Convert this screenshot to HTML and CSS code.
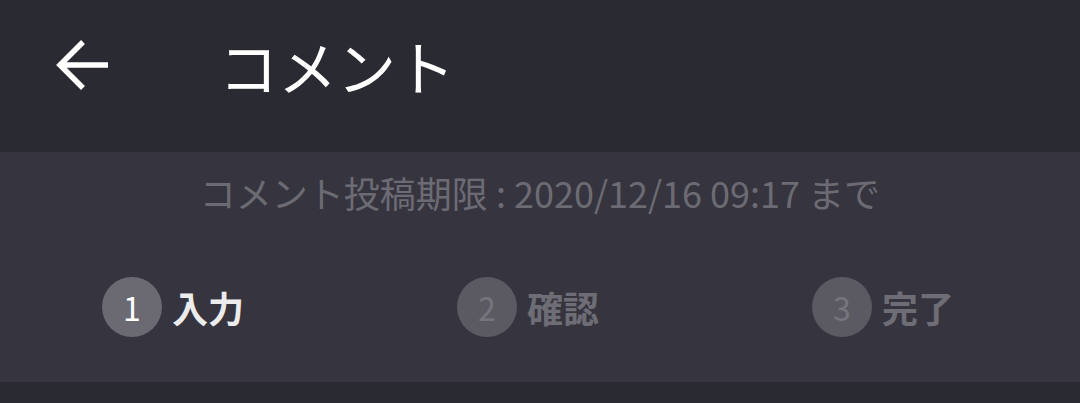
FILE: index.html
```html
<!DOCTYPE html>
<html lang="ja">
<head>
    <meta charset="UTF-8">
    <meta name="viewport" content="width=device-width, initial-scale=1.0">
    <title>コメント</title>
    <link rel="stylesheet" href="styles.css">
</head>
<body>
    <header class="app-bar">
        <button class="back-btn" aria-label="戻る">
            <svg width="60" height="60" viewBox="0 0 60 60">
                <path d="M57 30H9 M32 7 L9 30 L32 53" fill="none" stroke="#fff" stroke-width="5.5"/>
            </svg>
        </button>
        <h1 class="title">コメント</h1>
    </header>

    <section class="comment-info">
        <p class="deadline">コメント投稿期限 : 2020/12/16 09:17 まで</p>

        <!-- ステップ表示 -->
        <ol class="steps">
            <li class="step active"><span class="num">1</span><span class="label">入力</span></li>
            <li class="step"><span class="num">2</span><span class="label">確認</span></li>
            <li class="step"><span class="num">3</span><span class="label">完了</span></li>
        </ol>
    </section>

    <div class="bottom"></div>
</body>
</html>
```

FILE: styles.css
```css
body {
    margin: 0;
    font-family: "Noto Sans CJK JP", "Noto Sans", sans-serif;
    background-color: #2a2a32;
    overflow: hidden;
}

.app-bar {
    height: 152px;
    box-sizing: border-box;
    padding-bottom: 22px;
    background-color: #2a2a32;
    display: flex;
    align-items: center;
}

.back-btn {
    width: 60px;
    height: 60px;
    margin-left: 51px;
    padding: 0;
    border: none;
    background: none;
    display: flex;
}

.title {
    margin: 0 0 0 108px;
    font-size: 59px;
    font-weight: 400;
    color: #fff;
    line-height: 1;
}

.comment-info {
    height: 230px;
    background-color: #36353f;
}

.deadline {
    margin: 0;
    padding-top: 18px;
    text-align: center;
    font-size: 36px;
    line-height: 44px;
    color: #6c6b74;
}

.steps {
    list-style: none;
    margin: 0;
    padding: 63px 0 0 102px;
    display: flex;
}

.step {
    flex: 0 0 355px;
    display: flex;
    align-items: center;
    gap: 10px;
}

.step:last-child {
    flex: 0 0 auto;
}

.num {
    width: 60px;
    height: 60px;
    border-radius: 50%;
    background-color: #5b5a63;
    color: #76757e;
    font-size: 32px;
    display: flex;
    align-items: center;
    justify-content: center;
}

.label {
    font-size: 36px;
    font-weight: 700;
    color: #6e6d76;
}

.step.active .num {
    background-color: #6b6a72;
    color: #fff;
}

.step.active .label {
    color: #ececec;
}

.bottom {
    height: 21px;
    background-color: #2a2a32;
}
```
